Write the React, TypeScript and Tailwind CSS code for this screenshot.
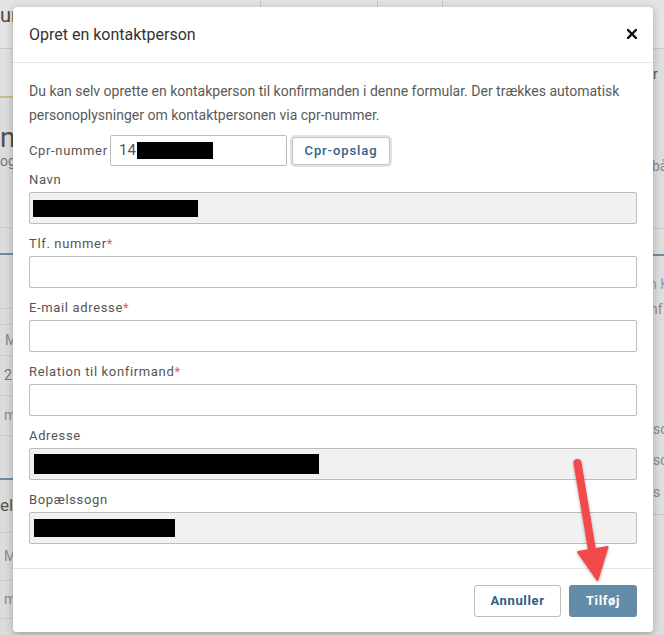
import React from "react";

const Rule = ({ c = "bg-[#cbcbcb]" }: { c?: string }) => <div className={`h-px shrink-0 ${c}`} />;

function Field({
  label,
  required,
  filled,
  redact,
}: {
  label: string;
  required?: boolean;
  filled?: boolean;
  redact?: string;
}) {
  return (
    <div className="mb-[10px]">
      <div className="h-5 text-[13px] leading-5 tracking-[0.05em] text-[#555]">
        {label}
        {required && <span className="text-[#e85a58]">*</span>}
      </div>
      <div
        className={`mt-[2px] flex h-8 items-center rounded-[2px] border border-[#bcbcbc] pl-[3px] ${
          filled ? "bg-[#f1f1f1]" : "bg-white"
        }`}
      >
        {redact && <div className={`bg-black ${redact}`} />}
      </div>
    </div>
  );
}

function LeftStrip() {
  return (
    <div className="flex w-[13px] shrink-0 flex-col overflow-hidden bg-[#dcdcdc] text-[#666]">
      <div className="h-[48px] shrink-0 bg-[#e4e4e4] pt-[3px] text-[20px] leading-6 text-[#4a4a4a]">un</div>
      <Rule />
      <div className="h-[47px] shrink-0 bg-[#e1e1e1]" />
      <div className="h-[2px] shrink-0 bg-[#c9c184]" />
      <div className="h-[129px] shrink-0 pt-[26px]">
        <div className="text-[28px] leading-7 text-[#505050]">n</div>
        <div className="-mt-[1px] text-[14px] leading-5 text-[#777]">og</div>
      </div>
      <Rule />
      <div className="h-[25px] shrink-0" />
      <div className="h-[2px] shrink-0 bg-[#6d8ba6]" />
      <div className="h-[53px] shrink-0" />
      <Rule />
      <div className="h-[15px] shrink-0" />
      <Rule />
      <div className="flex h-[30px] shrink-0 items-center pl-[5px] text-[14px] text-[#8a8a8a]">M</div>
      <Rule />
      <div className="flex h-[39px] shrink-0 items-center pl-[4px] text-[14px] text-[#777]">2</div>
      <Rule />
      <div className="flex h-[39px] shrink-0 items-center pl-[4px] text-[14px] text-[#8a8a8a]">m</div>
      <Rule />
      <div className="h-[42px] shrink-0" />
      <div className="h-[2px] shrink-0 bg-[#6d8ba6]" />
      <div className="flex h-[52px] shrink-0 items-center text-[17px] text-[#555]">elt</div>
      <Rule />
      <div className="flex h-[47px] shrink-0 items-center pl-[4px] text-[14px] text-[#8a8a8a]">M</div>
      <Rule />
      <div className="flex h-[37px] shrink-0 items-center pl-[4px] text-[14px] text-[#8a8a8a]">m</div>
      <Rule />
    </div>
  );
}

function RightStrip() {
  return (
    <div className="flex w-[11px] shrink-0 flex-col overflow-hidden bg-[#dedede] text-[14px] text-[#666]">
      <div className="h-[48px] shrink-0 bg-[#e4e4e4]" />
      <Rule />
      <div className="h-[15px] shrink-0" />
      <div className="h-5 shrink-0 leading-5 text-[#555]">r</div>
      <div className="h-[72px] shrink-0" />
      <div className="h-5 shrink-0 -ml-[1px] leading-5 text-[#888]">bå</div>
      <div className="h-[52px] shrink-0" />
      <Rule />
      <div className="h-[25px] shrink-0" />
      <div className="h-[2px] shrink-0 bg-[#6d8ba6]" />
      <div className="h-[18px] shrink-0" />
      <div className="h-5 shrink-0 -ml-[4px] whitespace-nowrap leading-5 text-[#86a2ba]">n K</div>
      <div className="h-[5px] shrink-0" />
      <div className="h-5 shrink-0 -ml-[3px] whitespace-nowrap leading-5 text-[#9a8a6a]">nf</div>
      <div className="h-[100px] shrink-0" />
      <div className="h-5 shrink-0 whitespace-nowrap leading-5 text-[#888]">sc</div>
      <div className="h-[11px] shrink-0" />
      <div className="h-5 shrink-0 whitespace-nowrap leading-5 text-[#888]">sc</div>
      <div className="h-[12px] shrink-0" />
      <div className="h-5 shrink-0 whitespace-nowrap leading-5 text-[#888]">
        s <span className="text-[#b59a4a]">i</span>
      </div>
      <div className="h-[12px] shrink-0" />
      <Rule c="bg-[#c4c4c4]" />
    </div>
  );
}

export default function App() {
  return (
    <div className="relative flex h-[635px] w-[664px] overflow-hidden bg-[#dcdcdc] font-['Roboto',sans-serif]">
      <LeftStrip />

      <div className="flex w-[640px] shrink-0 flex-col">
        <div className="flex h-[7px] shrink-0 bg-[#e3e3e3]">
          <div className="w-[247px] shrink-0" />
          <div className="w-[117px] shrink-0 border-l border-[#c9c9c9]" />
          <div className="w-[65px] shrink-0 border-l border-[#c9c9c9]" />
          <div className="flex-1 border-l border-[#c9c9c9]" />
        </div>

        <div className="relative z-10 flex h-[625px] shrink-0 flex-col rounded-[4px] bg-white shadow-[0_2px_8px_rgba(0,0,0,0.25)]">
          <div className="flex h-14 shrink-0 items-center justify-between border-b border-[#e3e3e3] px-4">
            <div className="text-[16px] text-[#333]">Opret en kontaktperson</div>
            <svg width="10" height="10" viewBox="0 0 10 10" className="mt-[-2px]">
              <path d="M1 1 L9 9 M9 1 L1 9" stroke="#111" strokeWidth="2.4" strokeLinecap="square" />
            </svg>
          </div>

          <div className="flex-1 px-4 pt-4 pb-[14px]">
            <p className="text-[14px] leading-6 text-[#5a5a5a]">
              Du kan selv oprette en kontakperson til konfirmanden i denne formular. Der trækkes automatisk
              personoplysninger om kontaktpersonen via cpr-nummer.
            </p>

            <div className="mt-2 flex items-center">
              <div className="w-[76px] shrink-0 whitespace-nowrap text-[13px] tracking-[0.05em] text-[#555]">
                Cpr-nummer
              </div>
              <div className="ml-[5px] flex h-[31px] w-[177px] items-center rounded-[2px] border border-[#bcbcbc] pl-2 text-[15px] text-[#555]">
                14
                <div className="ml-[1px] h-[17px] w-[76px] bg-black" />
              </div>
              <button className="ml-[5px] h-[28px] w-[98px] rounded-[3px] border border-[#c4c4c4] bg-white text-[13px] font-medium tracking-[0.07em] text-[#2f6388] ring-2 ring-[#e4e4e4]">
                Cpr-opslag
              </button>
            </div>

            <div className="mt-[4px]">
              <Field label="Navn" filled redact="h-[17px] w-[165px]" />
              <Field label="Tlf. nummer" required />
              <Field label="E-mail adresse" required />
              <Field label="Relation til konfirmand" required />
              <Field label="Adresse" filled redact="ml-[1px] h-[20px] w-[285px]" />
              <Field label="Bopælssogn" filled redact="ml-[1px] h-[18px] w-[141px]" />
            </div>
          </div>

          <div className="flex shrink-0 justify-end gap-2 border-t border-[#e3e3e3] px-4 pt-4 pb-[15px]">
            <button className="h-8 w-[87px] rounded-[3px] border border-[#bcbcbc] bg-white text-[13px] font-bold tracking-[0.05em] text-[#2d5f84]">
              Annuller
            </button>
            <button className="h-8 w-[68px] rounded-[3px] bg-[#628ca8] text-[13px] font-bold tracking-[0.05em] text-white">
              Tilføj
            </button>
          </div>
        </div>

        <div className="flex h-[3px] shrink-0 bg-[#d6d6d6]" />
      </div>

      <RightStrip />

      <svg
        className="pointer-events-none absolute inset-0 z-20"
        width="664"
        height="635"
        viewBox="0 0 664 635"
      >
        <defs>
          <filter id="sh" x="-50%" y="-50%" width="200%" height="200%">
            <feDropShadow dx="0" dy="1" stdDeviation="1.5" floodColor="#000" floodOpacity="0.35" />
          </filter>
        </defs>
        <g filter="url(#sh)">
          <path d="M577.5 463 L593 556" stroke="#f2484b" strokeWidth="8" strokeLinecap="round" fill="none" />
          <path d="M578 552 L607.5 547 L597.5 580 Z" fill="#f2484b" stroke="#f2484b" strokeWidth="2" strokeLinejoin="round" />
        </g>
      </svg>
    </div>
  );
}
